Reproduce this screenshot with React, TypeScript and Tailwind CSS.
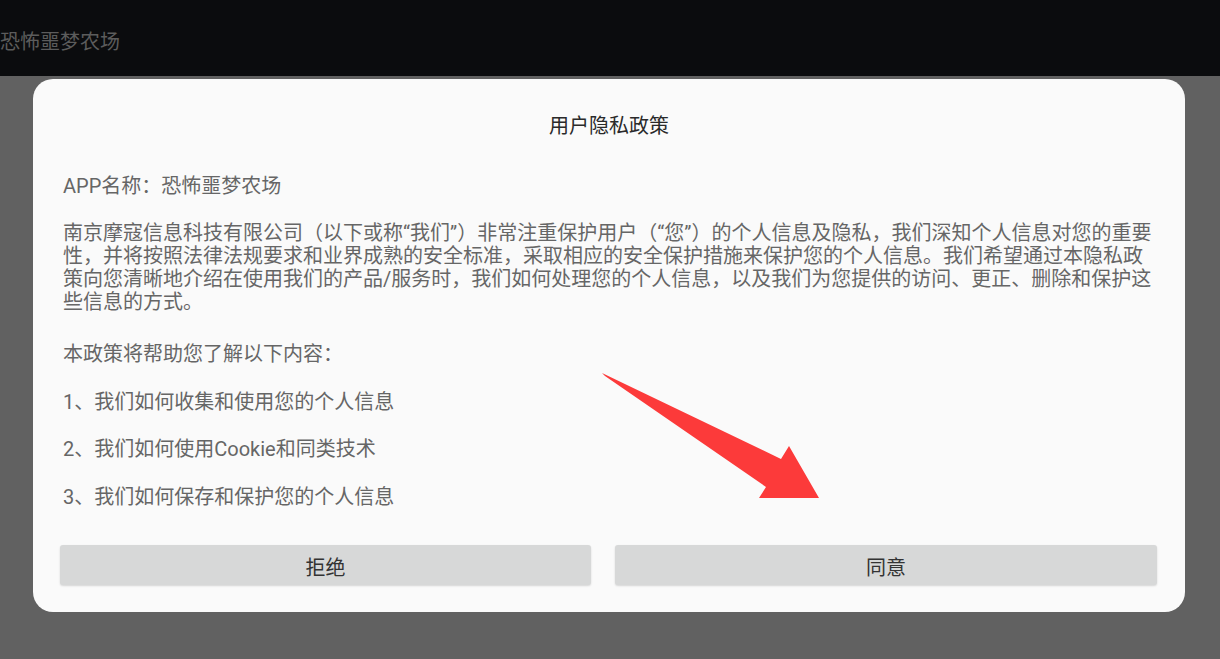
import React from 'react';

const font = { fontFamily: 'Roboto, "Noto Sans CJK SC", sans-serif' };

const introLines = [
  '南京摩寇信息科技有限公司（以下或称“我们”）非常注重保护用户（“您”）的个人信息及隐私，我们深知个人信息对您的重要',
  '性，并将按照法律法规要求和业界成熟的安全标准，采取相应的安全保护措施来保护您的个人信息。我们希望通过本隐私政',
  '策向您清晰地介绍在使用我们的产品/服务时，我们如何处理您的个人信息，以及我们为您提供的访问、更正、删除和保护这',
  '些信息的方式。',
];

const items = [
  '1、我们如何收集和使用您的个人信息',
  '2、我们如何使用Cookie和同类技术',
  '3、我们如何保存和保护您的个人信息',
];

const Arrow = () => (
  <svg
    className="absolute left-0 top-0 pointer-events-none"
    width="1220"
    height="659"
    viewBox="0 0 1220 659"
  >
    <polygon
      points="602,373 781,459 789,446 819,498 759,498 766,487 605,376"
      fill="#fc3a3a"
    />
  </svg>
);

const App = () => {
  return (
    <div className="relative w-[1220px] h-[659px] overflow-hidden bg-[#616161]" style={font}>
      {/* top app bar */}
      <div className="h-[76px] bg-[#0b0c0e] flex items-center pt-[8px]">
        <span className="text-[20px] leading-[24px] text-[#5c5c5c]">恐怖噩梦农场</span>
      </div>

      {/* privacy dialog */}
      <div className="ml-[33px] mt-[3px] w-[1152px] h-[533px] rounded-[20px] bg-[#fafafa] pt-[34px] px-[27px]">
        <h2 className="text-center text-[20px] leading-[24px] text-[#2a2a2a] font-normal pt-[1px]">用户隐私政策</h2>

        <div className="px-[3px] text-[20px] leading-[23px] text-[#666]">
          <p className="mt-[37px]">APP名称：恐怖噩梦农场</p>
          <p className="mt-[24px]">
            {introLines.map((line, i) => (
              <span key={i} className="block whitespace-nowrap">{line}</span>
            ))}
          </p>
          <p className="mt-[29px]">本政策将帮助您了解以下内容：</p>
          {items.map((item) => (
            <p key={item} className="mt-[24.5px]">{item}</p>
          ))}
        </div>

        <div className="mt-[36px] flex gap-[24px]">
          <button className="w-[531px] h-[40px] pt-[7px] rounded-[3px] bg-[#d7d8d8] shadow-[0_1px_2px_rgba(0,0,0,0.15)] text-[20px] leading-[24px] text-[#333]">
            拒绝
          </button>
          <button className="w-[542px] h-[40px] pt-[7px] rounded-[3px] bg-[#d7d8d8] shadow-[0_1px_2px_rgba(0,0,0,0.15)] text-[20px] leading-[24px] text-[#333]">
            同意
          </button>
        </div>
      </div>

      <Arrow />
    </div>
  );
};

export default App;
